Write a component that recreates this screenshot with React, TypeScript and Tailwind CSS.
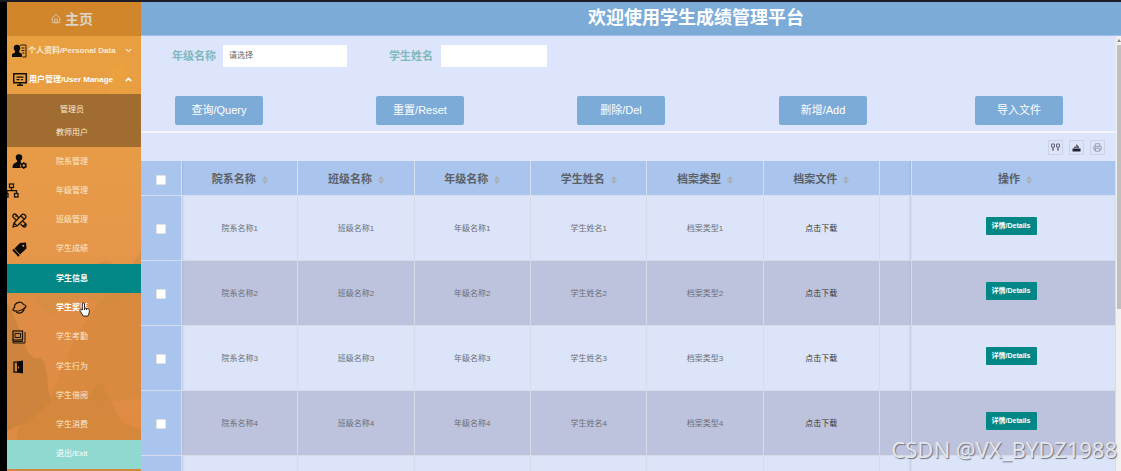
import React, { useState } from 'react';
import { ChevronDown, ChevronUp, Home, Printer } from 'lucide-react';

const PersonalIcon = () => (
  <svg viewBox="0 0 30 28" className="h-[14px] w-[15px]">
    <circle cx="10" cy="8" r="6.5" fill="#0b0b0b" />
    <path d="M6 12h8l1 5 5 3v6H0v-6l6-3z" fill="#0b0b0b" />
    <path d="M16 2h12v24h-7M19 8h6M19 13h6M20 18h5" fill="none" stroke="#2b1d0c" strokeWidth="2" />
  </svg>
);

const MonitorIcon = () => (
  <svg viewBox="0 0 28 26" className="h-[13px] w-[14px]" fill="none" stroke="#161208">
    <rect x="1.5" y="1.5" width="25" height="18" strokeWidth="3" />
    <path d="M7 8h14M7 13h6M16 13h4" strokeWidth="2.5" />
    <path d="M14 20v4M8 24.5h12" strokeWidth="3" />
  </svg>
);

const UserGearIcon = () => (
  <svg viewBox="0 0 30 30" className="h-[15px] w-[15px]">
    <circle cx="14" cy="7" r="6.5" fill="#0b0b0b" />
    <path d="M10 11h8l-1 5 2 2-3 5 1 5H1q-1-9 9-12z" fill="#0b0b0b" />
    <circle cx="23.5" cy="23" r="4" fill="none" stroke="#0b0b0b" strokeWidth="3" />
    <path d="M23.5 16v3M23.5 27v3M17.5 19.5l2 1M27.5 25.5l2 1M29.5 19.5l-2 1M19.5 25.5l-2 1" stroke="#0b0b0b" strokeWidth="2.5" />
  </svg>
);

const SitemapIcon = () => (
  <svg viewBox="0 0 24 30" className="h-[15px] w-[12px]" fill="none" stroke="#161208" strokeWidth="2.5">
    <rect x="5" y="2" width="8" height="7" />
    <path d="M9 9v6M0 15h19v6M0 15v6" />
    <rect x="15" y="21" width="7" height="7" />
    <path d="M-4 21h6v7h-6" />
  </svg>
);

const PencilRulerIcon = () => (
  <svg viewBox="0 0 30 30" className="h-[15px] w-[15px]" fill="none" stroke="#161208" strokeWidth="2.5" strokeLinejoin="round">
    <path d="M2 28l2-8L20 3q3-2 6 1t1 6L10 26zM18 6l6 6M4 20l6 6" />
    <path d="M13 9L8 3Q5 1 3 3t-1 5l6 6M10 4l-3 3M17 22l5 5q3 2 5 0t1-5l-6-5M22 27l5-5" />
  </svg>
);

const TagIcon = () => (
  <svg viewBox="0 0 30 30" className="h-[15px] w-[15px]">
    <path d="M16 2l12-1 1 12-13 12L5 13z" fill="#0b0b0b" />
    <circle cx="22.5" cy="7.5" r="2.2" fill="#e3954a" />
    <path d="M2 15l12 13" stroke="#0b0b0b" strokeWidth="4" />
  </svg>
);

const PlanetIcon = () => (
  <svg viewBox="0 0 30 26" className="h-[13px] w-[15px]" fill="none" stroke="#1c150c" strokeWidth="2.5">
    <path d="M5 14a10 10 0 0 1 18.5-6.500M24.500 13a10 10 0 0 1-16 9" />
    <path d="M23 7q5 1 5 4-2 5-12 8T2 18q-1-2 4-6" />
  </svg>
);

const BooksIcon = () => (
  <svg viewBox="0 0 28 28" className="h-[14px] w-[14px]" fill="none" stroke="#1c150c" strokeWidth="2.5">
    <rect x="2" y="2" width="19" height="18" />
    <path d="M2 18v8h24V4M6 7h11v8H6zM2 23h20" strokeWidth="2" />
  </svg>
);

const DoorIcon = () => (
  <svg viewBox="0 0 22 28" className="ml-px h-[14px] w-[11px]">
    <path d="M2 4h8v20H2z" fill="none" stroke="#0b0b0b" strokeWidth="2.5" />
    <path d="M8 3l12-2v26L8 25z" fill="#0b0b0b" />
    <path d="M11 13v4" stroke="#d98a3f" strokeWidth="2" />
  </svg>
);

const SortIcon = () => (
  <svg viewBox="0 0 6 8" className="h-2 w-[6px]" fill="#a9adb3">
    <path d="M3 0l3 3.500H0zM3 8l3-3.500H0z" />
  </svg>
);

const ColumnsIcon = () => (
  <svg viewBox="0 0 18 18" className="h-[9px] w-[9px]" fill="none" stroke="#6a6680" strokeWidth="2">
    <path d="M1 2h6v6H1zM11 2h6v6h-6zM4 8v8M14 8v8M2 12h4M12 12h4" />
  </svg>
);

const ExportIcon = () => (
  <svg viewBox="0 0 18 18" className="h-[9px] w-[9px]">
    <path d="M1 11h16v6H1z" fill="#22222e" />
    <path d="M4 10V7h4V2l6 5v3" fill="#66666f" />
  </svg>
);

const Scenery = () => (
  <svg viewBox="0 0 134 469" preserveAspectRatio="none" className="absolute inset-0 h-full w-full">
    <path d="M103 92V75q2-13 10-13t9 13v17z" fill="#eda63a" opacity=".4" />
    <path d="M0 270q8-10 17-5t18 3 17-5 16 4 20-3 22 1 24-17v221H0z" fill="#d18a3f" opacity=".6" />
    <path d="M24 294l20 20 14-12 20-8 16 10 40-10v166H0V294z" fill="#e48c46" opacity=".6" />
    <path d="M0 300q10 18 16 38t15 18 10 30l3 14-22 20-12 4-10 5z" fill="#c27f38" opacity=".6" />
    <path d="M44 394q12-30 20-48t24-40 46-20v110l-34 4z" fill="#d18838" opacity=".4" />
    <path d="M10 429q14-24 28-32t30-4 20-8 14 10 14 25 18 7v42H10z" fill="#cf8638" opacity=".6" />
  </svg>
);

const menu = [
  { label: '院系管理', icon: UserGearIcon },
  { label: '年级管理', icon: SitemapIcon, flush: true },
  { label: '班级管理', icon: PencilRulerIcon },
  { label: '学生成绩', icon: TagIcon },
  { label: '学生信息', active: true },
  { label: '学生奖惩', icon: PlanetIcon, hover: true },
  { label: '学生考勤', icon: BooksIcon },
  { label: '学生行为', icon: DoorIcon },
  { label: '学生借阅' },
  { label: '学生消费' },
  { label: '退出/Exit', exit: true },
];

const columns = ['院系名称', '班级名称', '年级名称', '学生姓名', '档案类型', '档案文件'];
const rows = [1, 2, 3, 4];

const checkboxClass = 'mx-auto block size-[10px] appearance-none rounded-[1px] border border-[#e2e2e2] bg-white';

const Sidebar: React.FC = () => (
  <aside className="relative w-[134px] shrink-0 overflow-hidden bg-linear-to-b from-[#e9a13e] via-[#e6974a] to-[#df8a42] text-[8px] text-[#fbead2]">
    <Scenery />
    <div className="relative">
      <a href="#home" className="flex h-[34px] items-center justify-center gap-1 bg-[#d1862b] pr-1 text-[14px] font-bold text-[#dcd5cc]">
        <Home size={10} strokeWidth={2} />
        主页
      </a>
      <button className="flex h-[29px] w-full items-center gap-px pr-2 pl-[5px] font-bold">
        <PersonalIcon />
        <span className="flex-1 text-left whitespace-nowrap">个人资料/Personal Data</span>
        <ChevronDown size={9} strokeWidth={3} />
      </button>
      <button className="flex h-[29px] w-full items-center gap-[2px] pr-2 pl-[6px] font-bold text-white">
        <MonitorIcon />
        <span className="flex-1 text-left whitespace-nowrap">用户管理/User Manage</span>
        <ChevronUp size={9} strokeWidth={4} />
      </button>
      <div className="flex h-[53px] flex-col justify-center bg-[#a06c30] pr-1 text-center leading-[23px]">
        <a href="#admin">管理员</a>
        <a href="#teacher">教师用户</a>
      </div>
      <nav className="grid h-[322px] auto-rows-fr">
        {menu.map((item) => (
          <a
            key={item.label}
            href="#menu"
            className={`grid grid-cols-[49px_1fr] items-center ${
              item.active ? 'bg-[#028786] text-white' : item.exit ? 'bg-[#8fd9d0] text-white' : ''
            } ${item.active || item.hover ? 'font-bold text-white' : ''}`}
          >
            <span className={item.flush ? '' : 'pl-[5px]'}>{item.icon && <item.icon />}</span>
            <span>{item.label}</span>
          </a>
        ))}
      </nav>
    </div>
    {/* hand pointer over the hovered entry */}
    <svg viewBox="0 0 20 26" className="absolute top-[300px] left-[72px] h-[15px] w-[11px]" fill="#fff" stroke="#222" strokeWidth="1.8" strokeLinejoin="round">
      <path d="M6 14V3q0-2 2-2t2 2v7l7 2q2 1 2 3l-1 6-2 4H8l-6-9q-1-2 1-3z" />
      <path d="M10 10v4M13.5 11v3" />
    </svg>
  </aside>
);

const Filters: React.FC = () => {
  const [name, setName] = useState('');
  return (
    <form className="border-b-2 border-[#f3f5f8] pt-[9px] pb-[6px]" onSubmit={(e) => e.preventDefault()}>
      <div className="flex items-center pl-[31px] text-[11px] font-bold text-[#7fb9bd]">
        <label htmlFor="grade" className="w-[51px]">年级名称</label>
        <select id="grade" className="h-[22px] w-[124px] appearance-none rounded-[1px] bg-white px-[6px] text-[8px] font-normal text-[#666]">
          <option>请选择</option>
        </select>
        <label htmlFor="student" className="ml-[42px] w-[52px]">学生姓名</label>
        <input
          id="student"
          value={name}
          onChange={(e) => setName(e.target.value)}
          className="h-[22px] w-[106px] rounded-[1px] bg-white px-[6px] text-[8px] font-normal text-[#666]"
        />
      </div>
      <div className="mt-[29px] grid grid-cols-[201fr_201fr_202fr_196fr_141fr] pl-[34px]">
        {['查询/Query', '重置/Reset', '删除/Del', '新增/Add', '导入文件'].map((label) => (
          <button key={label} className="h-[29px] w-[88px] rounded-[2px] bg-[#7cabd8] text-[11px] text-white">
            {label}
          </button>
        ))}
      </div>
    </form>
  );
};

const Toolbar: React.FC = () => (
  <div className="flex h-[28px] items-center justify-end gap-[6px] pr-[11px]">
    {[
      { label: '筛选列', icon: <ColumnsIcon /> },
      { label: '导出', icon: <ExportIcon /> },
      { label: '打印', icon: <Printer size={9} color="#8088a0" /> },
    ].map((tool) => (
      <button key={tool.label} aria-label={tool.label} className="flex size-[15px] items-center justify-center border border-[#cdd3e2]">
        {tool.icon}
      </button>
    ))}
  </div>
);

const RecordTable: React.FC = () => (
  <table className="w-full table-fixed border-separate border-spacing-0 text-center text-[8px] text-[#6b6e76] [&_td]:border-r [&_td]:border-b [&_td]:border-[#d5dbe9] [&_th]:border-r [&_th]:border-b [&_th]:border-[#d5dfef]">
    <colgroup>
      <col className="w-[41px]" />
      {columns.map((c) => (
        <col key={c} />
      ))}
      <col className="w-[32px]" />
      <col className="w-[204px]" />
    </colgroup>
    <thead className="bg-[#a9c5ed] text-[11px] text-[#5c6168]">
      <tr className="h-[35px]">
        <th className="pt-[3px]">
          <input type="checkbox" aria-label="全选" className={checkboxClass} />
        </th>
        {columns.map((c, i) => (
          <th key={c} className={i === 0 ? 'pt-[3px] shadow-[inset_3px_0_3px_-3px_#8ea6cb]' : 'pt-[3px]'}>
            <span className="flex items-center justify-center gap-[6px]">
              {c}
              <SortIcon />
            </span>
          </th>
        ))}
        <th className="shadow-[inset_-3px_0_3px_-3px_#8ea6cb]" />
        <th className="pt-[3px] pl-[3px]">
          <span className="flex items-center justify-center gap-[6px]">
            操作
            <SortIcon />
          </span>
        </th>
      </tr>
    </thead>
    <tbody>
      {rows.map((n) => (
        <tr key={n} className="h-[65px] bg-[#dbe4f8] even:bg-[#bec3dd]">
          <td className="bg-[#a9c5ed] pt-px">
            <input type="checkbox" aria-label={`选择${n}`} className={checkboxClass} />
          </td>
          {columns.slice(0, 5).map((c, i) => (
            <td key={c} className={i === 0 ? 'pt-[2px] shadow-[inset_3px_0_3px_-3px_#a9b0c6]' : 'pt-[2px]'}>
              {c}
              {n}
            </td>
          ))}
          <td className="pt-[2px]">
            <a href="#download" className="text-[#333]">点击下载</a>
          </td>
          <td className="shadow-[inset_-3px_0_3px_-3px_#a9b0c6]" />
          <td className="pr-[5px]">
            <button className="mb-1 h-[18px] w-[51px] rounded-[1px] bg-[#028786] text-[7px] font-bold text-white">详情/Details</button>
          </td>
        </tr>
      ))}
      <tr className="h-[65px] bg-[#dbe4f8]">
        <td className="bg-[#a9c5ed]" />
        {columns.map((c, i) => (
          <td key={c} className={i === 0 ? 'shadow-[inset_3px_0_3px_-3px_#a9b0c6]' : ''} />
        ))}
        <td className="shadow-[inset_-3px_0_3px_-3px_#a9b0c6]" />
        <td />
      </tr>
    </tbody>
  </table>
);

const App: React.FC = () => (
  <div className="relative flex h-screen overflow-hidden border-t-2 border-[#1c1b27] bg-black pl-[7px] font-['Liberation_Sans','Noto_Sans_CJK_SC',sans-serif]">
    <Sidebar />
    <main className="flex min-w-0 flex-1 flex-col bg-[#dde5fd]">
      <header className="flex h-[34px] shrink-0 items-center justify-center border-b border-[#9fc0e6] bg-[#7cabd8] pl-[130px]">
        <h1 className="text-[18px] font-bold text-white">欢迎使用学生成绩管理平台</h1>
      </header>
      <div className="flex min-h-0 flex-1">
        <div className="min-w-0 flex-1 overflow-hidden">
          <Filters />
          <Toolbar />
          <RecordTable />
        </div>
        <div className="w-[5px] shrink-0 bg-[#f0f0f0] pt-[3px]">
          <svg viewBox="0 0 4 3" className="ml-px h-[3px] w-1" fill="#8a8a8a">
            <path d="M2 0l2 3H0z" />
          </svg>
          <div className="mt-[3px] ml-px h-[264px] bg-[#bfbfbf]" />
        </div>
      </div>
    </main>
    <div className="absolute right-1 bottom-1 font-['Noto_Sans',sans-serif] text-[22px] leading-9 text-[#e4e6ec] text-shadow-[1px_1px_1px_#6f7282]">
      CSDN @VX_BYDZ1988
    </div>
  </div>
);

export default App;
